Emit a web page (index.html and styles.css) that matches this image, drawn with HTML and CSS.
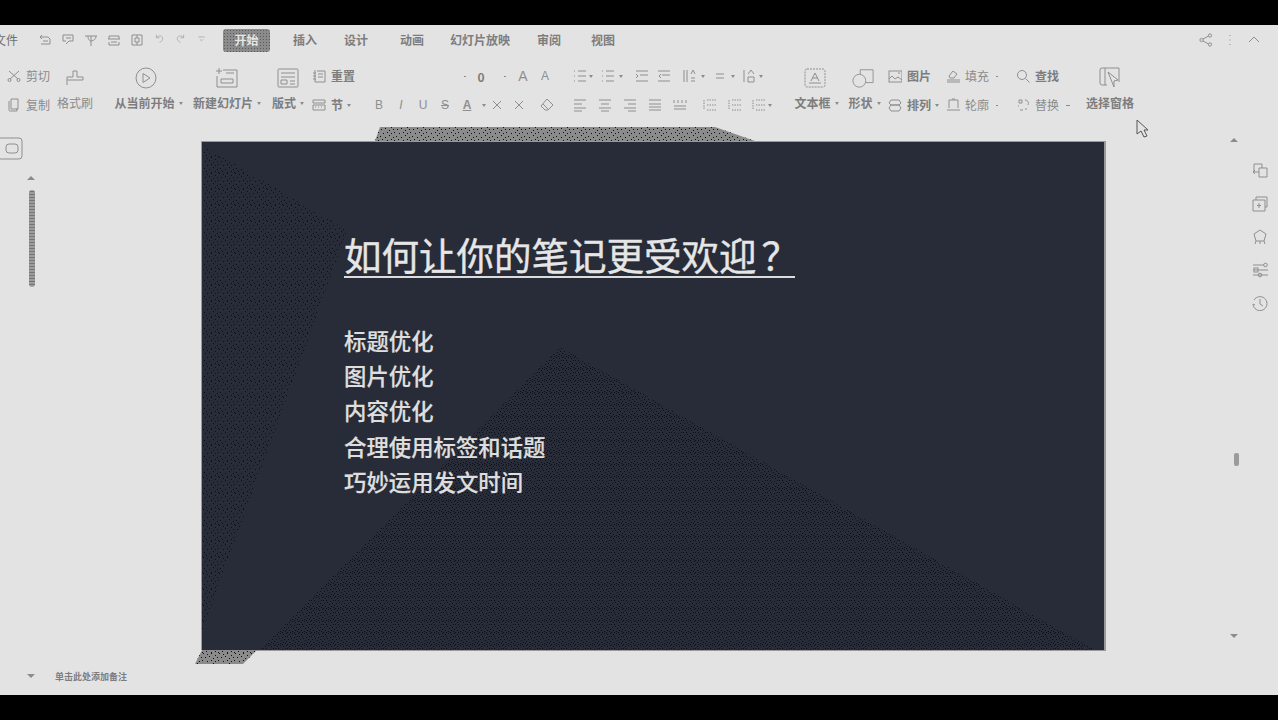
FILE: index.html
```html
<!DOCTYPE html>
<html lang="zh">
    <head>
        <meta charset="utf-8">
        <title>如何让你的笔记更受欢迎</title>
        <link rel="stylesheet" href="styles.css">
    </head>
    <body>
        <div class="blackbar"></div>
        <div class="app">
            <!-- tab row -->
            <div class="tabs">
                <span class="tab tab-file">文件</span>
                <div class="quick">
                    <svg class="qi" viewBox="0 0 14 14"><path d="M2 4h8l2 2v5H3M2 4l2-2M2 4l2 2M5 8h5"/></svg>
                    <svg class="qi" viewBox="0 0 14 14"><path d="M2 2h10M2 2v6h3M12 2v6H8l-3 3M5 5h5"/></svg>
                    <svg class="qi" viewBox="0 0 14 14"><path d="M1 3h12M7 3v10M4 3c0 4 2 5 3 5s5-1 5-5"/></svg>
                    <svg class="qi" viewBox="0 0 14 14"><path d="M2 6V3h10v3M1 6h12M2 9v3h10V9M4 9h6"/></svg>
                    <svg class="qi" viewBox="0 0 14 14"><path d="M2 2h10v10H2zM5 5h4v4H5zM7 2v3M7 9v3"/></svg>
                    <svg class="qi qi-dim" viewBox="0 0 14 14"><path d="M3 6c2-3 7-3 8 0s-2 5-4 6M3 6V2M3 6h4"/></svg>
                    <svg class="qi qi-dim" viewBox="0 0 14 14"><path d="M11 6C9 3 4 3 3 6s2 5 4 6M11 6V2M11 6H7"/></svg>
                    <svg class="qi qi-dim" viewBox="0 0 14 14"><path d="M3 5h8M5 8l2 2 2-2"/></svg>
                </div>
                <span class="tab tab-active"><span>开始</span></span>
                <span class="tab tab-insert">插入</span>
                <span class="tab tab-design">设计</span>
                <span class="tab tab-anim">动画</span>
                <span class="tab tab-show">幻灯片放映</span>
                <span class="tab tab-review">审阅</span>
                <span class="tab tab-view">视图</span>
                <div class="tab-right">
                    <svg class="qi" viewBox="0 0 14 14"><circle cx="2.5" cy="7" r="1.6"/><circle cx="11" cy="2.5" r="1.6"/><circle cx="11" cy="11.5" r="1.6"/><path d="M4 6l5.600-3M4 8l5.600 3"/></svg>
                    <svg class="qi" viewBox="0 0 14 14"><path d="M7 2v1M7 6.500v1M7 11v1"/></svg>
                    <svg class="qi" viewBox="0 0 14 14"><path d="M2 9l5-5 5 5"/></svg>
                </div>
            </div>

            <!-- ribbon tools -->
            <div class="tools">
                <div class="grp g-clip">
                    <div class="row">
                        <svg class="ic" viewBox="0 0 14 14"><path d="M2 2l9 8M12 2l-9 8"/><circle cx="2.500" cy="11" r="1.500"/><circle cx="11.500" cy="11" r="1.500"/></svg>
                        <span class="lbl-thin">剪切</span>
                    </div>
                    <div class="row">
                        <svg class="ic" viewBox="0 0 14 14"><path d="M4 1h7v10H9M4 1v10h6v2H3a1 1 0 0 1-1-1V3"/></svg>
                        <span class="lbl-thin">复制</span>
                    </div>
                </div>
                <div class="grp big g-brush">
                    <div class="big-ic"><svg class="ic-md" viewBox="0 0 18 18"><path d="M7 2h4v6h6v3H1V8h6zM1 11v5"/></svg></div>
                    <span class="lbl-thin">格式刷</span>
                </div>
                <div class="grp big g-play">
                    <div class="big-ic"><svg class="ic-lg" viewBox="0 0 22 22"><circle cx="11" cy="11" r="10"/><path d="M8 6.500l7 4.500-7 4.500z"/></svg></div>
                    <span class="lbl">从当前开始<i class="caret"></i></span>
                </div>
                <div class="grp big g-new">
                    <div class="big-ic"><svg class="ic-lg" viewBox="0 0 22 22"><path d="M7 3h14v17H1V9M3 1v6M0 4h6M5 12h12v4H5zM10 6h8"/></svg></div>
                    <span class="lbl">新建幻灯片<i class="caret"></i></span>
                </div>
                <div class="grp big g-layout">
                    <div class="big-ic"><svg class="ic-lg" viewBox="0 0 22 22"><rect x="1" y="2" width="20" height="18" rx="1"/><path d="M4 6h14M4 10h14M4 13h6v4H4zM13 14h5M13 17h5"/></svg></div>
                    <span class="lbl">版式<i class="caret"></i></span>
                </div>
                <div class="grp g-reset">
                    <div class="row">
                        <svg class="ic" viewBox="0 0 14 14"><path d="M3 1v12h10V2H5M1 4h3M1 7h3M1 10h3M6 5h5M6 8h5"/></svg>
                        <span class="lbl">重置</span>
                    </div>
                    <div class="row">
                        <svg class="ic" viewBox="0 0 14 14"><path d="M1 2h12v3H1zM1 7h12v5H1zM3 9h1M6 9h1M9 9h1"/></svg>
                        <span class="lbl">节<i class="caret"></i></span>
                    </div>
                </div>

                <div class="grp g-font">
                    <div class="row font-top">
                        <i class="dot"></i>
                        <span class="size-val">0</span>
                        <i class="dot g-dot"></i>
                        <span class="glyph glyph-lg">A</span>
                        <span class="glyph">A</span>
                    </div>
                    <div class="row font-bot">
                        <span class="glyph">B</span>
                        <span class="glyph glyph-i">I</span>
                        <span class="glyph">U</span>
                        <span class="glyph glyph-s">S</span>
                        <span class="glyph glyph-a">A</span>
                        <i class="caret"></i>
                        <svg class="ic g4" viewBox="0 0 14 14"><path d="M3 3l8 8M11 3l-8 8"/></svg>
                        <svg class="ic g8" viewBox="0 0 14 14"><path d="M3 3l8 8M11 3l-8 8"/></svg>
                        <svg class="ic g14" viewBox="0 0 14 14"><path d="M7 1l6 6-5 5H5L1 8zM3 6l6 6"/></svg>
                    </div>
                </div>

                <div class="grp g-para">
                    <div class="row">
                        <svg class="ic" viewBox="0 0 14 14"><use href="#lines-b"/></svg><i class="caret g2"></i>
                        <svg class="ic g8" viewBox="0 0 14 14"><use href="#lines-b"/></svg><i class="caret g4"></i>
                        <svg class="ic g12" viewBox="0 0 14 14"><path d="M1 2h12M5 6h8M1 12h12M1 5l2 2-2 2"/></svg>
                        <svg class="ic g8" viewBox="0 0 14 14"><path d="M1 2h12M5 6h8M1 12h12M4 5L2 7l2 2"/></svg>
                        <svg class="ic g12" viewBox="0 0 14 14"><path d="M1 1v12M4 1v12M8 5l2-4 2 4M8 9h4M8 12h4"/></svg><i class="caret g4"></i>
                        <svg class="ic g8" viewBox="0 0 14 14"><path d="M3 5h8M3 9h8"/></svg><i class="caret g4"></i>
                        <svg class="ic g8" viewBox="0 0 14 14"><path d="M1 1v12M5 5l3-4 3 4M5 8h6v5H5z"/></svg><i class="caret g2"></i>
                    </div>
                    <div class="row">
                        <svg class="ic" viewBox="0 0 14 14"><use href="#al-left"/></svg>
                        <svg class="ic g11" viewBox="0 0 14 14"><use href="#al-center"/></svg>
                        <svg class="ic g11" viewBox="0 0 14 14"><use href="#al-right"/></svg>
                        <svg class="ic g11" viewBox="0 0 14 14"><path d="M1 2h12M1 6h12M1 9h12M1 12h12"/></svg>
                        <svg class="ic g11" viewBox="0 0 14 14"><path d="M1 2v3M5 2v3M9 2v3M13 2v3M1 11h12M1 8h12"/></svg>
                        <svg class="ic g16" viewBox="0 0 14 14"><use href="#spc"/></svg>
                        <svg class="ic g11" viewBox="0 0 14 14"><use href="#spc"/></svg>
                        <svg class="ic g10" viewBox="0 0 14 14"><use href="#spc"/></svg><i class="caret g2"></i>
                    </div>
                </div>

                <div class="grp big g-textbox">
                    <div class="big-ic"><svg class="ic-lg" viewBox="0 0 22 22"><rect class="dash" x="1" y="2" width="20" height="18" rx="2"/><path d="M7 14l4-8 4 8M8 11h6M5 16h12"/></svg></div>
                    <span class="lbl">文本框<i class="caret"></i></span>
                </div>
                <div class="grp big g-shape">
                    <div class="big-ic"><svg class="ic-lg" viewBox="0 0 24 22"><circle cx="8" cy="14" r="7"/><path d="M9 7V2h14v14h-8"/></svg></div>
                    <span class="lbl">形状<i class="caret"></i></span>
                </div>
                <div class="grp g-pic">
                    <div class="row">
                        <svg class="ic" viewBox="0 0 14 14"><rect x="1" y="2" width="13" height="11"/><path d="M1 10l3-3 3 3 3-2 4 3M10 4h2"/></svg>
                        <span class="lbl">图片</span>
                    </div>
                    <div class="row">
                        <svg class="ic" viewBox="0 0 14 14"><path d="M3 2h8l2 3-2 2H3L1 5zM3 7h8l2 3-2 3H3l-2-3z"/></svg>
                        <span class="lbl">排列<i class="caret"></i></span>
                    </div>
                </div>
                <div class="grp g-fill">
                    <div class="row">
                        <svg class="ic" viewBox="0 0 14 14"><path d="M3 7l4-5 4 3-3 4H4zM1 13h13M1 11h13"/></svg>
                        <span class="lbl-thin">填充<i class="dot g-caret"></i></span>
                    </div>
                    <div class="row">
                        <svg class="ic" viewBox="0 0 14 14"><path d="M3 10V2h9v8M1 12h13M6 1h3"/></svg>
                        <span class="lbl-thin">轮廓<i class="dot g-caret"></i></span>
                    </div>
                </div>
                <div class="grp g-find">
                    <div class="row">
                        <svg class="ic" viewBox="0 0 14 14"><circle cx="6" cy="6" r="4.500"/><path d="M9.500 9.500l4 4"/></svg>
                        <span class="lbl">查找</span>
                    </div>
                    <div class="row">
                        <svg class="ic" viewBox="0 0 14 14"><path d="M3 5V2h3v3zM2 8h1M4 12h3M9 2c3 0 4 3 3 5M9 11h2"/></svg>
                        <span class="lbl-thin">替换<i class="dash-caret"></i></span>
                    </div>
                </div>
                <div class="grp big g-pane">
                    <div class="big-ic"><svg class="ic-lg" viewBox="0 0 22 22"><path d="M8 18H3a2 2 0 0 1-2-2V3a2 2 0 0 1 2-2h17v14M6 1v17M9 5l10 8-4 1v6z"/></svg></div>
                    <span class="lbl">选择窗格</span>
                </div>
            </div>

            <!-- slide area -->
            <div class="stage">
                <div class="left-rail">
                    <svg class="rail-box" viewBox="0 0 23 23"><path d="M0 1h19a3 3 0 0 1 3 3v15a3 3 0 0 1-3 3H0"/><rect x="6" y="7" width="12" height="9" rx="3"/></svg>
                    <i class="arrow-up"></i>
                    <div class="thumb-scroll"></div>
                </div>

                <div class="slide">
                    <svg class="slide-bg" viewBox="0 0 903 509">
                        <defs>
                            <pattern id="dots" width="16" height="16" patternUnits="userSpaceOnUse">
                                <path d="M1 0h1v1H1zM5 1h1v1H5zM9 0h1v1H9zM13 2h1v1h-1zM3 4h1v1H3zM7 3h1v1H7zM11 5h1v1h-1zM15 4h1v1h-1zM0 7h1v1H0zM5 8h1v1H5zM9 7h1v1H9zM13 8h1v1h-1zM2 11h1v1H2zM7 12h1v1H7zM11 10h1v1h-1zM15 12h1v1h-1zM4 14h1v1H4zM9 15h1v1H9zM13 14h1v1h-1zM0 15h1v1H0z"/>
                            </pattern>
                            <pattern id="fine" width="12" height="12" patternUnits="userSpaceOnUse">
                                <path d="M0 0h1v1H0zM3 1h1v1H3zM6 0h1v1H6zM9 1h1v1H9zM1 3h1v1H1zM4 3h1v1H4zM8 4h1v1H8zM11 3h1v1h-1zM2 6h1v1H2zM5 5h1v1H5zM7 7h1v1H7zM10 6h1v1h-1zM0 8h1v1H0zM3 9h1v1H3zM6 10h1v1H6zM9 9h1v1H9zM1 11h1v1H1zM4 11h1v1H4zM8 11h1v1H8zM11 10h1v1h-1z"/>
                            </pattern>
                        </defs>
                        <polygon class="behind" points="173,0 178,-14 513,-14 553,0"/>
                        <polygon class="behind" points="0,509 -7,523 41,523 55,509"/>
                        <polygon class="shade" points="173,0 178,-14 513,-14 553,0"/>
                        <polygon class="shade" points="0,509 -7,523 41,523 55,509"/>
                        <polygon class="shade" points="2,5 145,89 118,166 0,490"/>
                        <polygon class="shade-fine" points="358,206 58,509 893,509"/>
                    </svg>
                    <h1 class="slide-title">如何让你的笔记更受欢迎<span class="qmark">？</span></h1>
                    <ul class="slide-list">
                        <li>标题优化</li>
                        <li>图片优化</li>
                        <li>内容优化</li>
                        <li>合理使用标签和话题</li>
                        <li>巧妙运用发文时间</li>
                    </ul>
                </div>

                <div class="right-rail">
                    <i class="arrow-up arrow-side"></i>
                    <div class="side-icons">
                        <svg class="side-ic" viewBox="0 0 16 16"><path d="M2 6V1h8v4M2 6v3h5M7 5h8v9H7zM1 9l2-2M1 9l2 2"/></svg>
                        <svg class="side-ic" viewBox="0 0 16 16"><path d="M1 4h12v11H1zM4 4V1h11v10h-2M7 7v5M5 9.500h4"/></svg>
                        <svg class="side-ic" viewBox="0 0 16 16"><path d="M8 1l6 4-2 7H4L2 5zM4 12l-1 3M12 12l1 3M8 12v3"/></svg>
                        <svg class="side-ic" viewBox="0 0 16 16"><path d="M1 3h11M1 8h15M1 13h15"/><circle cx="13.500" cy="3" r="1.800"/><rect x="2" y="6" width="4" height="4"/><circle cx="8" cy="13" r="1.800"/></svg>
                        <svg class="side-ic" viewBox="0 0 16 16"><path d="M2 5a7 7 0 1 1-1 4M8 4v5l3 2M1 9l2 1"/></svg>
                    </div>
                    <div class="side-scroll"><i class="side-thumb"></i></div>
                    <i class="arrow-down arrow-side"></i>
                </div>
            </div>

            <div class="notes">
                <i class="arrow-down"></i>
                <span class="notes-text">单击此处添加备注</span>
            </div>
        </div>
        <div class="blackbar"></div>

        <!-- cursor sits over the ribbon -->
        <svg class="cursor" viewBox="0 0 13 19"><path d="M1 1v14l4-3 3 6 3-1-3-6h4z"/></svg>

        <svg class="defs">
            <symbol id="lines-b" viewBox="0 0 14 14"><path d="M1 2h1M5 2h8M1 7h1M5 7h8M1 12h1M5 12h8"/></symbol>
            <symbol id="al-left" viewBox="0 0 14 14"><path d="M1 2h12M1 6h8M1 10h12M1 13h8"/></symbol>
            <symbol id="al-center" viewBox="0 0 14 14"><path d="M1 2h12M3 6h8M1 10h12M3 13h8"/></symbol>
            <symbol id="al-right" viewBox="0 0 14 14"><path d="M1 2h12M5 6h8M1 10h12M5 13h8"/></symbol>
            <symbol id="spc" viewBox="0 0 14 14"><path d="M1 2v10M4 2h9M4 7h9M4 12h9" stroke-dasharray="1.500 1"/></symbol>
        </svg>
    </body>
</html>
```

FILE: styles.css
```css
* {
    box-sizing: border-box;
}

body {
    margin: 0;
    width: 1278px;
    height: 720px;
    overflow: hidden;
    background-color: #000;
    font-family: "Noto Sans CJK SC", "Liberation Sans", sans-serif;
    font-size: 12px;
    color: #7d7d7d;
}

i {
    font-style: normal;
}

svg path,
svg circle,
svg rect {
    fill: none;
    stroke: #8f8f8f;
    stroke-width: 1;
}

.blackbar {
    height: 25px;
    background-color: #000;
}

.app {
    height: 670px;
    background-color: #e3e3e3;
    display: flex;
    flex-direction: column;
    overflow: hidden;
}

/* tab row */
.tabs {
    height: 30px;
    display: flex;
    align-items: center;
}

.tab {
    font-weight: 700;
    white-space: nowrap;
    line-height: 16px;
}

.tab-file { margin-left: -6px; width: 22px; font-weight: 400; color: #6f6f6f; }
.tab-insert { margin-left: 23px; }
.tab-design { margin-left: 27px; }
.tab-anim { margin-left: 32px; }
.tab-show { margin-left: 26px; }
.tab-review { margin-left: 27px; }
.tab-view { margin-left: 30px; }

.tab-active {
    margin-left: 16px;
    width: 47px;
    height: 23px;
    border-radius: 3px;
    background-color: #8b8b8b;
    background-image: radial-gradient(#5a5a5a 0.6px, transparent 0.7px);
    background-size: 3px 3px;
    color: #e6e6e6;
    display: flex;
    align-items: center;
    justify-content: center;
}

.quick {
    margin-left: 22px;
    display: flex;
    gap: 9px;
}

.qi {
    width: 14px;
    height: 14px;
    flex: none;
}

.qi-dim {
    width: 11px;
    height: 11px;
    margin-left: 1px;
    opacity: 0.7;
}

.tab-right {
    margin-left: auto;
    padding-right: 17px;
    display: flex;
    gap: 10px;
}

/* ribbon */
.tools {
    height: 63px;
    padding-top: 7px;
    display: flex;
}

.grp {
    flex: none;
    display: grid;
    grid-template-rows: 28px 28px;
}

.row {
    display: flex;
    align-items: center;
}

.row + .row {
    padding-top: 2px;
}

.big {
    justify-items: center;
}

.big-ic {
    display: flex;
    align-items: center;
    justify-content: center;
    padding-top: 4px;
}

.g-play .big-ic {
    padding-right: 5px;
}

.g-textbox .big-ic,
.g-shape .big-ic {
    padding-right: 4px;
}

.lbl,
.lbl-thin {
    white-space: nowrap;
    display: flex;
    align-items: center;
    line-height: 28px;
}

.big .lbl,
.big .lbl-thin {
    line-height: 26px;
    height: 26px;
}

.lbl {
    font-weight: 700;
}

.lbl-thin {
    color: #8b8b8b;
}

.ic {
    width: 14px;
    height: 14px;
    flex: none;
}

.ic-md {
    width: 18px;
    height: 18px;
}

.ic-lg {
    width: 22px;
    height: 22px;
}

.row .ic + span {
    margin-left: 5px;
}

.caret {
    display: inline-block;
    flex: none;
    width: 0;
    height: 0;
    margin-left: 4px;
    border-left: 2.5px solid transparent;
    border-right: 2.5px solid transparent;
    border-top: 3px solid #8b8b8b;
}

.dot {
    display: inline-block;
    flex: none;
    width: 2px;
    height: 1px;
    background-color: #8b8b8b;
}

.g-caret { margin-left: 7px; }

.dash-caret {
    display: inline-block;
    width: 4px;
    height: 1px;
    margin-left: 7px;
    background-color: #8b8b8b;
}

.g2 { margin-left: 2px; }
.g4 { margin-left: 4px; }
.g8 { margin-left: 8px; }
.g10 { margin-left: 10px; }
.g11 { margin-left: 11px; }
.g12 { margin-left: 12px; }
.g14 { margin-left: 14px; }
.g16 { margin-left: 16px; }

.g-clip { margin-left: 7px; width: 50px; }
.g-brush { width: 36px; }
.g-play { margin-left: 20px; width: 71px; }
.g-new { margin-left: 8px; width: 70px; }
.g-layout { margin-left: 9px; width: 34px; }
.g-reset { margin-left: 7px; width: 49px; }
.g-font { margin-left: 7px; width: 196px; }
.g-para { margin-left: 9px; width: 205px; }
.g-textbox { margin-left: 15px; width: 47px; }
.g-shape { margin-left: 7px; width: 35px; }
.g-pic { margin-left: 6px; width: 52px; }
.g-fill { margin-left: 6px; width: 60px; }
.g-find { margin-left: 10px; width: 60px; }
.g-pane { margin-left: 10px; width: 47px; }

.font-top {
    padding-left: 96px;
}

.size-val {
    width: 22px;
    text-align: center;
    font-weight: 700;
    font-size: 12px;
    margin-left: 4px;
}

.g-dot {
    margin-left: 12px;
}

.glyph {
    width: 22px;
    text-align: center;
    font-family: "Liberation Sans", sans-serif;
    font-size: 12px;
    color: #8f8f8f;
}

.glyph-lg {
    font-size: 14px;
    margin-left: 6px;
}

.glyph-i {
    font-style: italic;
}

.glyph-s {
    text-decoration: line-through;
}

.glyph-a {
    text-decoration: underline;
    font-weight: 700;
}

/* slide area */
.stage {
    height: 542px;
    display: flex;
}

.left-rail {
    width: 202px;
    flex: none;
    display: flex;
    flex-direction: column;
    align-items: flex-start;
    padding-top: 19px;
}

.rail-box {
    width: 23px;
    height: 23px;
}

.arrow-up,
.arrow-down {
    display: block;
    width: 0;
    height: 0;
    border-left: 4px solid transparent;
    border-right: 4px solid transparent;
}

.arrow-up { border-bottom: 4px solid #8b8b8b; }
.arrow-down { border-top: 4px solid #8b8b8b; }

.left-rail .arrow-up {
    margin: 16px 0 0 27px;
}

.thumb-scroll {
    width: 6px;
    height: 97px;
    margin: 10px 0 0 29px;
    border-radius: 3px;
    background-color: #9c9c9c;
    background-image: radial-gradient(#777 0.6px, transparent 0.7px);
    background-size: 2px 3px;
}

.slide {
    position: relative;
    width: 904px;
    height: 509px;
    flex: none;
    margin-top: 23px;
    padding: 91px 0 0 142px;
    background-color: #272c38;
    border-right: 2px solid #9a9a9a;
    border-top: 1px solid #9a9a9a;
    box-shadow: -1px 0 0 #9a9a9a, 0 1px 0 #9a9a9a;
}

.slide-bg {
    position: absolute;
    left: 0;
    top: -1px;
    width: 903px;
    height: 509px;
    overflow: visible;
}

.behind {
    fill: #8b8b8b;
}

.shade {
    fill: url(#dots);
}

.shade-fine {
    fill: url(#fine);
}

#dots path,
#fine path {
    fill: #0d0f15;
    stroke: none;
}

.slide-title {
    position: relative;
    width: 451px;
    height: 45px;
    margin: 0;
    border-bottom: 2px solid #dcdcdc;
    font-size: 37.5px;
    font-weight: 400;
    line-height: 41px;
    color: #e6e6e6;
    white-space: nowrap;
    -webkit-text-stroke: 0.4px #e6e6e6;
}

.qmark {
    margin-left: 5px;
}

.slide-list {
    position: relative;
    list-style: none;
    margin: 45px 0 0;
    padding: 0;
    font-size: 22.4px;
    font-weight: 500;
    line-height: 35.2px;
    color: #dedede;
    -webkit-text-stroke: 0.2px #dedede;
}

.right-rail {
    flex: 1;
    display: flex;
    flex-direction: column;
    padding: 20px 0 22px;
}

.arrow-side {
    margin-left: 124px;
}

.side-icons {
    display: flex;
    flex-direction: column;
    gap: 17px;
    margin: 21px 0 0 146px;
}

.side-ic {
    width: 16px;
    height: 16px;
}

.side-scroll {
    flex: 1;
    margin-left: 128px;
    padding-top: 142px;
}

.side-thumb {
    display: block;
    width: 5px;
    height: 13px;
    border-radius: 2px;
    background-color: #9c9c9c;
}

/* notes */
.notes {
    flex: 1;
    display: flex;
    align-items: center;
    padding: 0 0 3px 27px;
}

.notes-text {
    margin-left: 20px;
    font-size: 9px;
    font-weight: 700;
}

.cursor {
    position: absolute;
    left: 1136px;
    top: 119px;
    width: 13px;
    height: 19px;
}

.cursor path {
    fill: #e3e3e3;
    stroke: #555;
}

.defs {
    position: absolute;
    width: 0;
    height: 0;
}

.dash {
    stroke-dasharray: 2 1;
}
```
